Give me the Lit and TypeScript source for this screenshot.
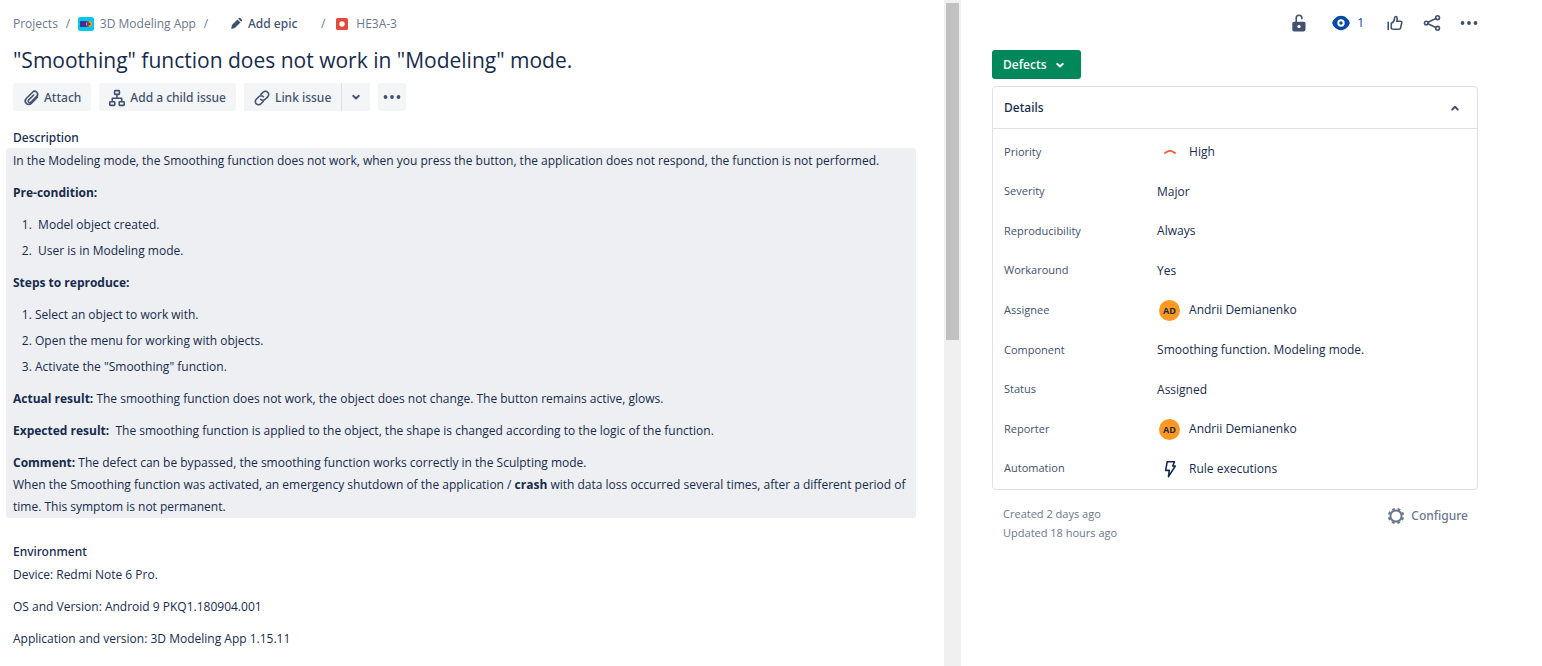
import { LitElement, html, css, svg, nothing, TemplateResult } from "lit";
import { customElement } from "lit/decorators.js";

const icons: Record<string, TemplateResult> = {
  attach: svg`<path d="M14.600 7 8.300 13.400a3.400 3.400 0 0 1-5 0 3.500 3.500 0 0 1 0-4.900l6.300-6.300a2.900 2.900 0 0 1 4.100 0 2.900 2.900 0 0 1 0 4.100l-5.900 5.900a1.500 1.500 0 0 1-2.200 0 1.500 1.500 0 0 1 0-2.100l5.100-5.100" />`,
  child: svg`<rect x="5.6" y=".6" width="4.8" height="3.8" rx=".6" /><rect x=".8" y="11.800" width="5" height="3.600" rx=".6" /><rect x="10.2" y="11.800" width="5" height="3.600" rx=".6" /><path d="M8 4.600V8M3.300 11.400V8.200h9.400v3.200" />`,
  link: svg`<path d="M6.800 4.500 9.100 2.200a3.200 3.200 0 0 1 4.600 0 3.200 3.200 0 0 1 0 4.600l-2.500 2.500a3.200 3.200 0 0 1-4.600 0M9.200 11.500l-2.300 2.300a3.200 3.200 0 0 1-4.600 0 3.200 3.200 0 0 1 0-4.600l2.500-2.500a3.200 3.200 0 0 1 4.600 0" />`,
  down: svg`<path stroke-width="1.900" d="M5.200 6.800 8 9.500l2.800-2.700" />`,
  up: svg`<path stroke-width="1.900" d="M5.200 9.500 8 6.800l2.800 2.700" />`,
  more: svg`<g fill="currentColor" stroke="none"><circle cx="1.500" cy="8" r="1.900" /><circle cx="8" cy="8" r="1.900" /><circle cx="14.500" cy="8" r="1.900" /></g>`,
  pencil: svg`<path fill="currentColor" stroke="none" d="M3.900 9 9.500 3.400l3 3L6.900 12l-3.700 1zM10.200 2.700l.7-.6c.4-.4 1-.4 1.400 0l1.500 1.500c.4.4.4 1 0 1.400l-.6.700z" />`,
  lock: svg`<rect x="1.300" y="6.800" width="13.200" height="9.600" rx="1.800" fill="currentColor" stroke="none" /><path d="M5.200 7V3.200C5.200 1.400 6.400.3 8 .3s2.900 1 2.900 2.700v.8" /><circle cx="8" cy="11.600" r="1.700" fill="#fff" stroke="none" />`,
  eye: svg`<path fill="currentColor" stroke="none" d="M8 .8C3.600.8.400 4.400-.6 7.200q-.3.8 0 1.600C.4 11.600 3.600 15.200 8 15.200s7.600-3.600 8.600-6.400q.3-.8 0-1.600C15.600 4.400 12.400.8 8 .8z" /><circle cx="8" cy="8" r="2.700" stroke="#fff" stroke-width="2" />`,
  like: svg`<path d="M1.200 7.200v7.200M4.300 8.300c1.700-.8 3-2.500 3.200-4.700.1-1.400.7-2.200 1.500-2.100 1.400.2 1.500 2.300.7 4.800h3.900c.9 0 1.400.6 1.200 1.500l-1.200 5.100c-.2.9-.8 1.400-1.600 1.400H6.700c-.9 0-1.600-.2-2.400-.7z" />`,
  share: svg`<circle cx="2.300" cy="8" r="1.800" /><circle cx="13.600" cy="2.700" r="1.900" /><circle cx="13.600" cy="13.300" r="1.900" /><path d="M4 7.200 11.800 3.500M4 8.800l7.800 3.700" />`,
  high: svg`<path stroke-width="1.900" d="M3 9q2.500-1.700 5-2.300 2.500.6 5 2.300" />`,
  bolt: svg`<path d="M5.200.8h7.300L10.700 5h2.600L6.500 15.600l.8-6.200H3.600z" />`,
  gear: svg`<circle cx="8" cy="8" r="5.600" stroke-width="2" /><circle cx="8" cy="8" r="7.200" stroke-width="2" stroke-dasharray="2.800 2.855" stroke-dashoffset="-1.400" />`,
};

const icon = (name: string, kind = "") =>
  html`<svg class="icon ${kind}" viewBox="0 0 16 16" aria-hidden="true">${icons[name]}</svg>`;

interface Field {
  label: string;
  value: string;
  mark?: "priority" | "avatar" | "bolt";
}

const fields: Field[] = [
  { label: "Priority", value: "High", mark: "priority" },
  { label: "Severity", value: "Major" },
  { label: "Reproducibility", value: "Always" },
  { label: "Workaround", value: "Yes" },
  { label: "Assignee", value: "Andrii Demianenko", mark: "avatar" },
  { label: "Component", value: "Smoothing function. Modeling mode." },
  { label: "Status", value: "Assigned" },
  { label: "Reporter", value: "Andrii Demianenko", mark: "avatar" },
  { label: "Automation", value: "Rule executions", mark: "bolt" },
];

@customElement("app-root")
export class AppRoot extends LitElement {
  static styles = css`
    :host {
      display: grid;
      grid-template-columns: minmax(0, 13fr) 17px minmax(0, 8fr);
      height: 100vh;
      overflow: hidden;
      background: #fff;
      color: #172b4d;
      font: 12px/22px "Open Sans", "Noto Sans", sans-serif;
    }
    * { box-sizing: border-box; }
    h1, h2, p, ol, dl, dd { margin: 0; }
    button { font: inherit; color: inherit; border: 0; background: none; padding: 0; cursor: pointer; }
    a { color: inherit; text-decoration: none; }
    .icon {
      display: block; flex: none; width: 16px; height: 16px; overflow: visible;
      fill: none; stroke: currentColor; stroke-width: 1.6; stroke-linecap: round; stroke-linejoin: round;
    }
    .butt { stroke-linecap: butt; }
    .heading, .actions, .crumbs .epic, .card-head, .foot button { font-family: "Noto Sans", "Open Sans", sans-serif; font-weight: 500; }

    .issue { padding: 13px 28px 0 13px; }
    .crumbs { display: flex; align-items: center; color: #6b778c; height: 22px; }
    .crumbs a, .crumbs button { display: flex; align-items: center; gap: 6px; }
    .slash { width: 20px; text-align: center; }
    .crumbs .epic { gap: 4px; margin: 0 16px 0 12px; color: #42526e; }
    .project { width: 16px; height: 14px; }
    .bug { width: 12px; height: 12px; margin: 0 2px 0 3px; }
    .title { font-size: 21px; line-height: 28px; font-weight: 500; margin-top: 11px; }

    .actions { display: flex; gap: 8px; margin-top: 9px; color: #42526e; }
    .actions button { display: flex; align-items: center; justify-content: center; gap: 5px; height: 28px; padding: 1px 10px 0; background: #f4f5f7; border-radius: 3px; }
    .split { display: flex; gap: 1px; background: #dfe1e6; border-radius: 3px; }
    .split button:first-child { border-radius: 3px 0 0 3px; }
    .split button:last-child { border-radius: 0 3px 3px 0; padding: 0 6px; }
    .actions .dots { padding: 0 6px; }

    .heading { font-size: 12px; line-height: 20px; }
    .description-title { margin-top: 17px; }
    .description { display: flex; flex-direction: column; gap: 10px; margin: 0 0 0 -7px; padding: 2px 7px 0; background: #edeff3; border-radius: 3px; }
    .description ol { display: flex; flex-direction: column; gap: 4px; padding-left: 22px; }
    strong { font-weight: 700; }
    .environment-title { margin-top: 24px; }
    .environment { display: flex; flex-direction: column; gap: 10px; margin-top: 2px; }

    .track { background: #f0f0f0; padding: 3px 2px; }
    .thumb { height: 51%; background: #c1c1c1; }

    .side { padding: 12px 64px 0 31px; }
    .tools { display: flex; justify-content: flex-end; align-items: center; gap: 21px; height: 22px; margin-right: 1px; color: #42526e; }
    .tools button { display: flex; align-items: center; gap: 8px; }
    .tools .watch { color: #0747a6; margin: 0 2px 0 5px; }
    .side .state { display: flex; align-items: center; gap: 5px; height: 29px; margin-top: 16px; padding: 0 13px 0 11px; background: #00875a; color: #fff; border-radius: 3px; font-weight: 600; }
    .card { margin-top: 7px; border: 1px solid #dfe1e6; border-radius: 4px; }
    .card-head { display: flex; width: 100%; justify-content: space-between; align-items: center; height: 42px; padding: 1px 14px 0 11px; border-bottom: 1px solid #dfe1e6; }
    .card-head .icon { color: #42526e; }
    .fields { display: grid; grid-auto-rows: 1fr; min-height: 360px; padding: 3px 11px 1px; }
    .field { display: grid; grid-template-columns: 153px 1fr; align-items: center; }
    .field dt { font-size: 11px; color: #42526e; }
    .field dd { display: flex; align-items: center; gap: 9px; padding-top: 1px; }
    .mark { display: grid; place-items: center; flex: none; width: 21px; height: 21px; margin-left: 2px; }
    .priority { color: #ff5630; }
    .avatar { background: #ff991f; border-radius: 50%; font-size: 9px; font-weight: 700; line-height: 21px; }
    .foot { display: flex; justify-content: space-between; margin: 14px 10px 0 11px; color: #6b778c; }
    .dates { font-size: 11px; line-height: 19px; }
    .foot button { display: flex; align-items: center; gap: 7px; height: 24px; }
  `;

  private mark(kind: Field["mark"]) {
    if (kind === "priority") return html`<span class="mark priority">${icon("high")}</span>`;
    if (kind === "avatar") return html`<span class="mark avatar">AD</span>`;
    if (kind === "bolt") return html`<span class="mark">${icon("bolt")}</span>`;
    return nothing;
  }

  render() {
    return html`
      <main class="issue">
        <nav class="crumbs" aria-label="Breadcrumb">
          <a href="#projects">Projects</a>
          <span class="slash">/</span>
          <a href="#app">
            <svg class="project" viewBox="0 0 16 14" aria-hidden="true">
              <rect width="16" height="14" rx="2.500" fill="#00c7e5" />
              <rect x="2" y="4" width="7.500" height="6" rx=".5" fill="#403294" />
              <circle cx="11" cy="7" r="3" fill="#ff991f" />
              <path d="M9 4.200h1.800v5.600H9z" fill="#5243aa" />
              <circle cx="11.500" cy="7" r="1" fill="#403294" />
            </svg>
            3D Modeling App
          </a>
          <span class="slash">/</span>
          <button class="epic">${icon("pencil")}Add epic</button>
          <span class="slash">/</span>
          <a href="#issue">
            <svg class="bug" viewBox="0 0 12 12" aria-hidden="true">
              <rect width="12" height="12" rx="1.500" fill="#e5493a" />
              <circle cx="6" cy="6" r="2.700" fill="#fff" />
            </svg>
            HE3A-3
          </a>
        </nav>
        <h1 class="title">"Smoothing" function does not work in "Modeling" mode.</h1>
        <div class="actions">
          <button>${icon("attach")}Attach</button>
          <button>${icon("child")}Add a child issue</button>
          <div class="split">
            <button>${icon("link")}Link issue</button>
            <button aria-label="More link options">${icon("down")}</button>
          </div>
          <button class="dots" aria-label="More actions">${icon("more")}</button>
        </div>

        <h2 class="heading description-title">Description</h2>
        <section class="description">
          <p>In the Modeling mode, the Smoothing function does not work, when you press the button, the application does not respond, the function is not performed.</p>
          <p><strong>Pre-condition:</strong></p>
          <ol>
            <li>&nbsp;Model object created.</li>
            <li>&nbsp;User is in Modeling mode.</li>
          </ol>
          <p><strong>Steps to reproduce:</strong></p>
          <ol>
            <li>Select an object to work with.</li>
            <li>Open the menu for working with objects.</li>
            <li>Activate the "Smoothing" function.</li>
          </ol>
          <p><strong>Actual result:</strong> The smoothing function does not work, the object does not change. The button remains active, glows.</p>
          <p><strong>Expected result:</strong>&nbsp; The smoothing function is applied to the object, the shape is changed according to the logic of the function.</p>
          <p><strong>Comment:</strong> The defect can be bypassed, the smoothing function works correctly in the Sculpting mode.<br />When the Smoothing function was activated, an emergency shutdown of the application / <strong>crash</strong> with data loss occurred several times, after a different period of time. This symptom is not permanent.</p>
        </section>

        <h2 class="heading environment-title">Environment</h2>
        <section class="environment">
          <p>Device: Redmi Note 6 Pro.</p>
          <p>OS and Version: Android 9 PKQ1.180904.001</p>
          <p>Application and version: 3D Modeling App 1.15.11</p>
        </section>
      </main>

      <div class="track"><div class="thumb"></div></div>

      <aside class="side">
        <div class="tools">
          <button aria-label="Restrictions">${icon("lock")}</button>
          <button class="watch" aria-label="Watchers">${icon("eye")}1</button>
          <button aria-label="Vote">${icon("like")}</button>
          <button aria-label="Share">${icon("share")}</button>
          <button aria-label="More">${icon("more")}</button>
        </div>
        <button class="state">Defects ${icon("down")}</button>
        <section class="card">
          <button class="card-head" aria-expanded="true">Details ${icon("up")}</button>
          <dl class="fields">
            ${fields.map(
              (f) => html`<div class="field"><dt>${f.label}</dt><dd>${this.mark(f.mark)}<span>${f.value}</span></dd></div>`
            )}
          </dl>
        </section>
        <div class="foot">
          <div class="dates"><p>Created 2 days ago</p><p>Updated 18 hours ago</p></div>
          <button>${icon("gear", "butt")}Configure</button>
        </div>
      </aside>
    `;
  }
}
